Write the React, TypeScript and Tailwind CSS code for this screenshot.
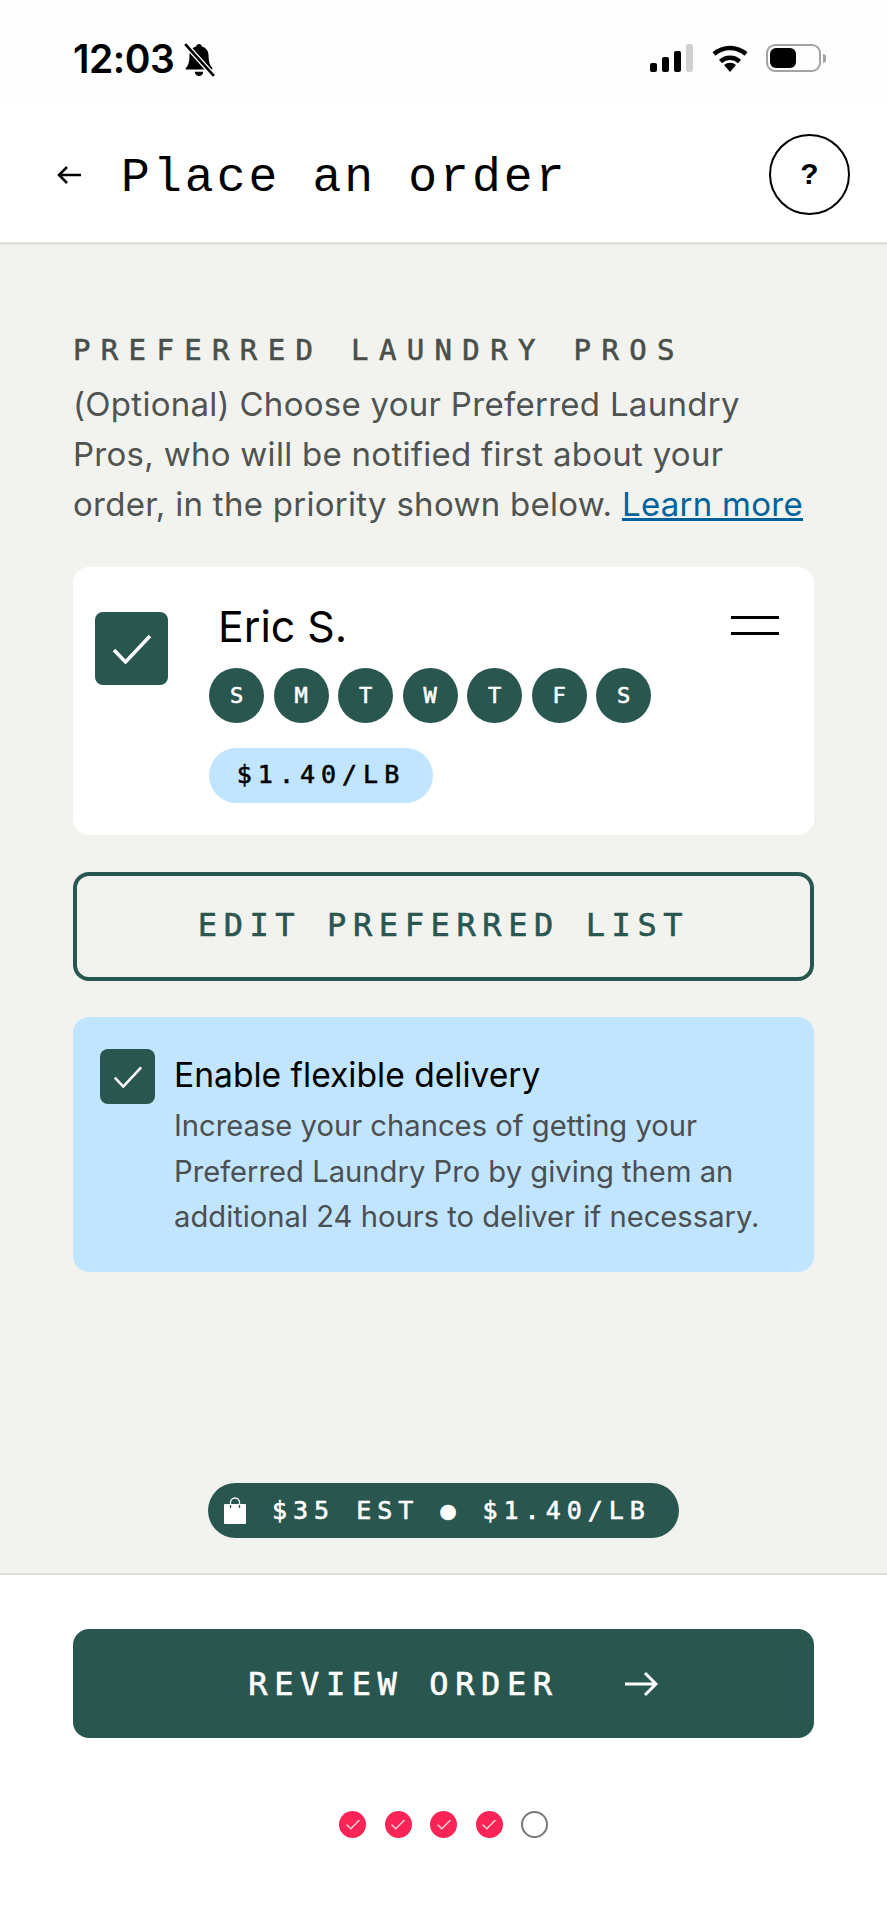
import { Check } from 'lucide-react';

const mono = 'font-["Liberation_Mono",monospace]';
const label = 'font-["DejaVu_Sans_Mono",monospace] [-webkit-text-stroke:0.6px_currentColor]';
const days = ['S', 'M', 'T', 'W', 'T', 'F', 'S'];

function StatusBar() {
  return (
    <div className="h-[106px] flex items-start justify-between pl-[73px] pr-[61px] pt-[41px] bg-[#fefefe]">
      <div className="flex items-center gap-[8px] text-black">
        <span className='text-[39px] leading-[36px] font-semibold tracking-[-0.5px] font-["Inter",sans-serif]'>12:03</span>
        <svg width="34" height="34" viewBox="0 0 32 32" className="mt-[2px]">
          <path d="M16 1c1.500 0 2.500 1 2.700 2.400 4 1.100 6.300 4.300 6.300 8.800 0 5 1 8.500 3.500 11.300v1.500H3.500v-1.500C6 21.700 7 17.200 7 12.200c0-4.500 2.300-7.700 6.300-8.800C13.500 2 14.500 1 16 1z" fill="black" />
          <path d="M12 27h8a4 4 0 0 1-8 0z" fill="black" />
          <path d="M3 1l27 30" stroke="white" strokeWidth="5" />
          <path d="M3 1l27 30" stroke="black" strokeWidth="2.500" />
        </svg>
      </div>
      <div className="flex items-center h-[34px] gap-[17px]">
        <svg width="44" height="28" viewBox="0 0 44 28">
          <rect x="0" y="19" width="7" height="9" rx="2" fill="black" />
          <rect x="12" y="13" width="7" height="15" rx="2" fill="black" />
          <rect x="24" y="7" width="7" height="21" rx="2" fill="black" />
          <rect x="36" y="0" width="7" height="28" rx="2" fill="#d1d1d1" />
        </svg>
        <svg width="38" height="28" viewBox="0 0 38 28">
          <path d="M19 28l-6-7a9 9 0 0 1 12 0z" fill="black" />
          <path d="M9.500 17.500a14 14 0 0 1 19 0" fill="none" stroke="black" strokeWidth="4.500" />
          <path d="M3 10a24 24 0 0 1 32 0" fill="none" stroke="black" strokeWidth="4.500" />
        </svg>
        <div className="flex items-center">
          <div className="w-[55px] h-[28px] rounded-[9px] border-[2px] border-[#a3a3a3] p-[2px]">
            <div className="w-[26px] h-full rounded-[6px] bg-black" />
          </div>
          <div className="w-[3px] h-[9px] ml-[2px] rounded-r-full bg-[#a3a3a3]" />
        </div>
      </div>
    </div>
  );
}

function Header() {
  return (
    <div className="h-[139px] flex items-center justify-between pl-[57px] pr-[37px] bg-white border-b-[3px] border-[#dfdfdd]">
      <div className="flex items-center gap-[40px]">
        <svg width="24" height="20" viewBox="0 0 24 20" fill="none" stroke="black" strokeWidth="2.500" className="mt-[2px]">
          <path d="M24 10H2M10 2l-8 8 8 8" />
        </svg>
        <h1 className={`${mono} pt-[8px] text-[48px] leading-none tracking-[3.100px] text-black`}>Place an order</h1>
      </div>
      <div className={`w-[81px] h-[81px] rounded-full border-[2.500px] border-black flex items-center justify-center pt-[4px] text-[30px] font-bold text-black ${mono}`}>?</div>
    </div>
  );
}

function TickBox({ size, tick }: { size: string; tick: string }) {
  return (
    <div className={`${size} shrink-0 rounded-[8px] bg-[#2a5650] flex items-center justify-center`}>
      <svg viewBox="0 0 40 30" className={tick} fill="none" stroke="white" strokeWidth="3.500">
        <path d="M2 16l11.500 12L38 2" />
      </svg>
    </div>
  );
}

export default function App() {
  return (
    <div className='w-[887px] min-h-[1920px] flex flex-col bg-white font-["Inter",sans-serif]'>
      <StatusBar />
      <Header />

      <main className="h-[1328px] flex flex-col px-[73px] pt-[87px] pb-[35px] bg-[#f2f3ef]">
        <h2 className={`${label} text-[29px] leading-[36px] tracking-[10.350px] text-[#4a4f4b] whitespace-nowrap`}>PREFERRED LAUNDRY PROS</h2>
        <p className="mt-[11px] text-[33px] leading-[50px] tracking-[0.280px] text-[#4f5352] whitespace-nowrap">
          (Optional) Choose your Preferred Laundry
          <br />
          Pros, who will be notified first about your
          <br />
          order, in the priority shown below. <span className="text-[#00639c] underline">Learn more</span>
        </p>

        <section className="mt-[38px] h-[268px] rounded-[16px] bg-white flex pl-[22px] pr-[35px] pt-[45px]">
          <TickBox size="w-[73px] h-[73px]" tick="w-[40px] h-[30px]" />
          <div className="ml-[41px] -mt-[10px] flex-1">
            <div className="pl-[9px] text-[42.800px] leading-[50px] text-black">Eric S.</div>
            <div className="mt-[16px] flex gap-[9.500px]">
              {days.map((d, i) => (
                <span key={i} className={`${label} w-[55px] h-[55px] rounded-full bg-[#2a5650] flex items-center justify-center text-[22px] text-white`}>{d}</span>
              ))}
            </div>
            <div className={`${label} mt-[25px] w-[224px] h-[55px] rounded-full bg-[#c2e5ff] flex items-center justify-center pb-[2px] text-[25px] tracking-[6px] text-black`}>$1.40/LB</div>
          </div>
          <div className="w-[48px] h-[19px] mt-[4px] border-y-[3px] border-black" />
        </section>

        <button className={`${label} mt-[37px] h-[109px] pb-[4px] rounded-[16px] border-[4px] border-[#2a5650] text-[32px] tracking-[6.600px] text-[#2a5650]`}>EDIT PREFERRED LIST</button>

        <section className="mt-[36px] h-[255px] rounded-[16px] bg-[#c2e5ff] flex pl-[27px] pt-[32px]">
          <TickBox size="w-[55px] h-[55px]" tick="w-[30px] h-[22px]" />
          <div className="ml-[19px] pt-[4px]">
            <div className="text-[33.600px] leading-[44px] text-black">Enable flexible delivery</div>
            <p className="mt-[6px] text-[29.200px] leading-[45.500px] text-[#4a4f52] whitespace-nowrap">
              Increase your chances of getting your
              <br />
              Preferred Laundry Pro by giving them an
              <br />
              additional 24 hours to deliver if necessary.
            </p>
          </div>
        </section>

        <div className="mt-auto self-center w-[471px] h-[55px] rounded-full bg-[#2a5650] flex items-center pl-[16px] text-white">
          <svg width="22" height="27" viewBox="0 0 22 27">
            <path d="M6.500 8V5.500a4.500 4.500 0 0 1 9 0V8" fill="none" stroke="white" strokeWidth="1.300" />
            <path d="M1 7h20a1 1 0 0 1 1 1v18a1 1 0 0 1-1 1H1a1 1 0 0 1-1-1V8a1 1 0 0 1 1-1z" fill="white" />
            <path d="M6.500 8v3M15.500 8v3" stroke="#2a5650" strokeWidth="1.300" />
          </svg>
          <span className={`${label} ml-[26px] text-[25px] tracking-[6px] whitespace-nowrap`}>$35 EST ● $1.40/LB</span>
        </div>
      </main>

      <footer className="flex-1 flex flex-col items-center border-t-[2px] border-[#dcdcda] px-[73px] pt-[54px] bg-white">
        <button className={`${label} w-full h-[109px] pl-[19px] rounded-[16px] bg-[#2a5650] flex items-center justify-center gap-[66px] text-[32px] tracking-[6.600px] text-white`}>
          REVIEW ORDER
          <svg width="33" height="26" viewBox="0 0 33 26" fill="none" stroke="white" strokeWidth="3">
            <path d="M0 13h31M20 2l11 11-11 11" />
          </svg>
        </button>
        <div className="mt-[73px] flex gap-[18.500px]">
          {[0, 1, 2, 3].map((i) => (
            <span key={i} className="w-[27px] h-[27px] rounded-full bg-[#fb2456] flex items-center justify-center">
              <Check size={18} color="#ffd0dc" strokeWidth={2} />
            </span>
          ))}
          <span className="w-[27px] h-[27px] rounded-full border-[2.500px] border-[#777777]" />
        </div>
      </footer>
    </div>
  );
}
